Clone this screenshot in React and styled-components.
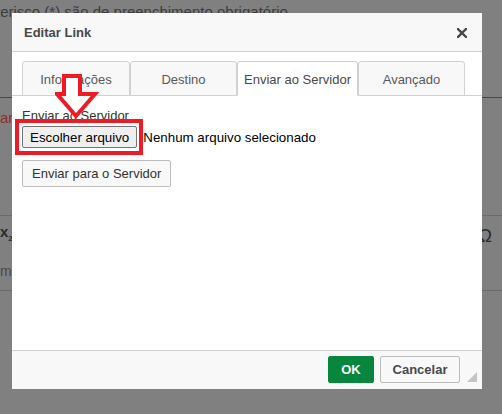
import React from 'react'
import styled, { createGlobalStyle } from 'styled-components'

const GlobalStyle = createGlobalStyle`
  html, body {
    margin: 0;
    padding: 0;
    width: 502px;
    height: 414px;
    overflow: hidden;
    background: #808080;
    font-family: "Liberation Sans", Arial, sans-serif;
  }
`

// page behind the dimmed overlay
const Page = styled.div`
  position: relative;
  width: 502px;
  height: 414px;
  background: #808080;
  overflow: hidden;
  display: flex;
  flex-direction: column;
`

const PageNote = styled.div`
  box-sizing: border-box;
  height: 97px;
  flex: none;
  padding-top: 3px;
  margin-left: -4px;
  font-size: 15px;
  line-height: 17px;
  color: #3c3c3c;
  white-space: nowrap;
`

const PageRow = styled.div`
  box-sizing: border-box;
  flex: none;
  display: flex;
  justify-content: space-between;
  align-items: center;
  height: ${({ h }) => h}px;
  margin-top: ${({ mt }) => mt || 0}px;
  border-top: 1px solid ${({ line }) => line || 'transparent'};
  font-size: ${({ fs }) => fs || 14}px;
  color: ${({ red }) => (red ? '#8e2f2f' : '#2a2a2a')};
`

const Glyph = styled.span`
  font-weight: ${({ bold }) => (bold ? 700 : 400)};
  margin-right: ${({ mr }) => mr || 0}px;
  margin-top: ${({ mt }) => mt || 0}px;
  font-size: ${({ fs }) => (fs ? `${fs}px` : 'inherit')};
  color: ${({ light }) => (light ? '#4a4a4a' : 'inherit')};
`

const Sub = styled.sub`
  font-size: 8px;
`

// dialog
const Dialog = styled.div`
  position: absolute;
  left: 12px;
  top: 13px;
  width: 470px;
  height: 376px;
  background: #fff;
  display: flex;
  flex-direction: column;
  color: #333;
`

const Header = styled.div`
  height: 38px;
  flex: none;
  display: flex;
  align-items: center;
  justify-content: space-between;
  padding: 0 15px 0 12px;
  background: #f8f8f8;
  border-bottom: 1px solid #d1d1d1;
`

const Title = styled.div`
  font-size: 13px;
  font-weight: 700;
  color: #484848;
`

const Close = styled.div`
  width: 10px;
  height: 10px;
  display: flex;
  margin-top: 2px;
`

const TabBar = styled.div`
  display: flex;
  padding: 9px 0 0 10px;
  border-bottom: 1px solid #d1d1d1;
  flex: none;
`

const Tab = styled.div`
  box-sizing: border-box;
  width: ${({ w }) => w}px;
  height: 35px;
  margin-bottom: -1px;
  display: flex;
  align-items: center;
  justify-content: center;
  font-size: 13px;
  color: ${({ active }) => (active ? '#484848' : '#595959')};
  background: ${({ active }) => (active ? '#fff' : '#f8f8f8')};
  border: 1px solid #d1d1d1;
  border-bottom-color: ${({ active }) => (active ? '#fff' : '#d1d1d1')};
  border-radius: 3px 3px 0 0;
  padding-top: 1px;
`

const Content = styled.div`
  flex: 1;
  position: relative;
  padding: 12px 10px 0;
  display: flex;
  flex-direction: column;
  align-items: flex-start;
`

const FieldLabel = styled.div`
  font-size: 13px;
  line-height: 15px;
  color: #333;
`

const FileRow = styled.div`
  position: relative;
  display: flex;
  align-items: center;
  margin-top: 3px;
  font-size: 13.33px;
  color: #000;
`

const FileButton = styled.div`
  box-sizing: border-box;
  height: 22px;
  padding: 0 7px;
  display: flex;
  align-items: center;
  background: #efefef;
  border: 1px solid #767676;
  border-radius: 2px;
  margin-right: 6px;
`

// annotation rectangle drawn over the screenshot
const Highlight = styled.div`
  position: absolute;
  left: -7px;
  top: -7px;
  width: 128px;
  height: 36px;
  box-sizing: border-box;
  border: 4px solid #ed1c24;
`

const Arrow = styled.svg`
  position: absolute;
  left: 43px;
  top: -22px;
`

const PlainButton = styled.div`
  box-sizing: border-box;
  height: 27px;
  margin-top: 12px;
  padding: 0 9px;
  display: flex;
  align-items: center;
  font-size: 13px;
  color: #333;
  background: #f8f8f8;
  border: 1px solid #bcbcbc;
  border-radius: 2px;
`

const Footer = styled.div`
  position: relative;
  box-sizing: border-box;
  height: 39px;
  flex: none;
  display: flex;
  justify-content: flex-end;
  gap: 6px;
  padding: 5px 22px 0;
  background: #f8f8f8;
  border-top: 1px solid #d1d1d1;
`

const FooterButton = styled.div`
  box-sizing: border-box;
  width: ${({ w }) => w}px;
  height: 27px;
  display: flex;
  align-items: center;
  justify-content: center;
  font-size: 13px;
  font-weight: 700;
  border-radius: 2px;
  color: ${({ primary }) => (primary ? '#fff' : '#484848')};
  background: ${({ primary }) => (primary ? '#09863e' : '#f8f8f8')};
  border: 1px solid ${({ primary }) => (primary ? '#09863e' : '#bcbcbc')};
`

const Grip = styled.div`
  position: absolute;
  right: 5px;
  bottom: 7px;
  width: 0;
  height: 0;
  border-left: 10px solid transparent;
  border-bottom: 10px solid #c4c4c4;
`

const tabs = [
  { label: 'Informações', w: 108 },
  { label: 'Destino', w: 107 },
  { label: 'Enviar ao Servidor', w: 121, active: true },
  { label: 'Avançado', w: 107 }
]

const App = () => (
  <>
    <GlobalStyle />
    <Page>
      <PageNote>terisco (*) são de preenchimento obrigatório</PageNote>
      <PageRow h={39} fs={15} line="#8a2b2b" red>
        <Glyph>ar</Glyph>
      </PageRow>
      <PageRow h={35} mt={79} fs={15} line="#6b6b6b">
        <Glyph bold>x<Sub>2</Sub></Glyph>
        <Glyph mr={10} mt={6} fs={18}>Ω</Glyph>
      </PageRow>
      <PageRow h={40} fs={14}>
        <Glyph light>ma</Glyph>
      </PageRow>
      <PageRow h={1} line="#6b6b6b" />

      <Dialog>
        <Header>
          <Title>Editar Link</Title>
          <Close>
            <svg width="10" height="10" viewBox="0 0 10 10">
              <path d="M1 1L9 9M9 1L1 9" stroke="#484848" strokeWidth="2.4" strokeLinecap="square" />
            </svg>
          </Close>
        </Header>

        <TabBar>
          {tabs.map((tab) => (
            <Tab key={tab.label} w={tab.w} active={tab.active}>{tab.label}</Tab>
          ))}
        </TabBar>

        <Content>
          <FieldLabel>Enviar ao Servidor</FieldLabel>
          <FileRow>
            <FileButton>Escolher arquivo</FileButton>
            <span>Nenhum arquivo selecionado</span>
            <Highlight />
          </FileRow>
          <PlainButton>Enviar para o Servidor</PlainButton>

          <Arrow width="46" height="48" viewBox="0 0 46 48">
            <polygon
              points="9,2 25,2 25,20 40,20 21,42 2,20 9,20"
              fill="#fff"
              stroke="#ed1c24"
              strokeWidth="4"
              strokeLinejoin="miter"
            />
          </Arrow>
        </Content>

        <Footer>
          <FooterButton w={46} primary>OK</FooterButton>
          <FooterButton w={80}>Cancelar</FooterButton>
          <Grip />
        </Footer>
      </Dialog>
    </Page>
  </>
)

export default App
